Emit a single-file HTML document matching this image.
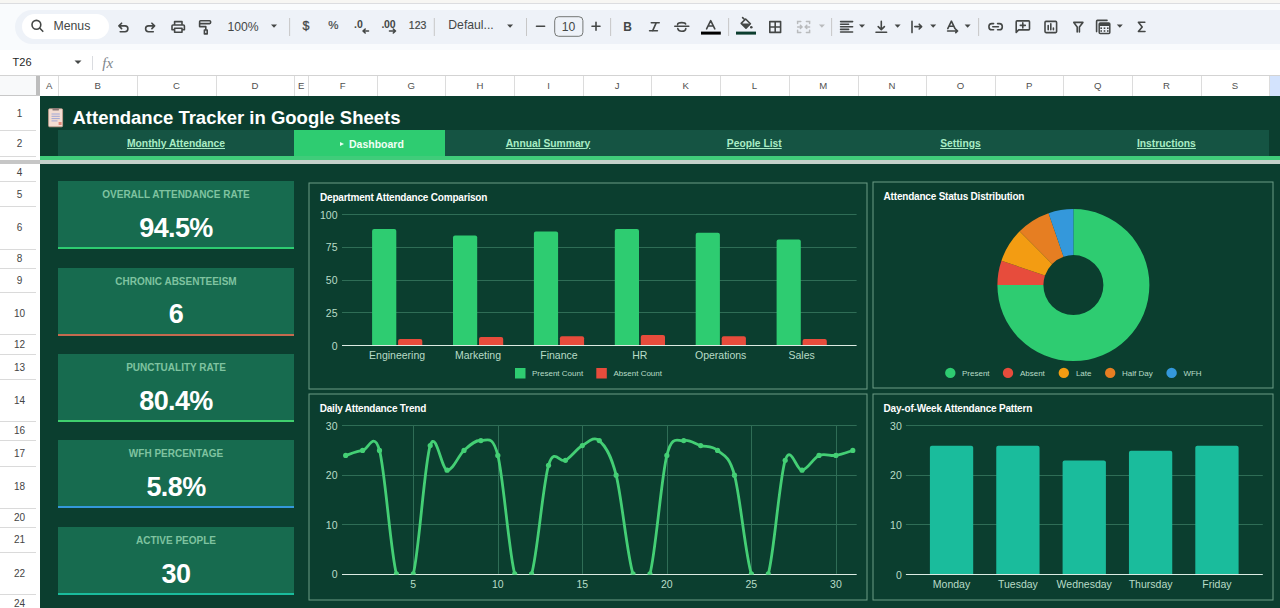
<!DOCTYPE html>
<html><head><meta charset="utf-8">
<style>
*{margin:0;padding:0;box-sizing:border-box}
html,body{width:1280px;height:608px;overflow:hidden;background:#fff;font-family:"Liberation Sans",sans-serif}
.a{position:absolute}
.rl{position:absolute;left:0;width:36px;height:1px;background:#dadada}
.rn{position:absolute;left:0;width:39px;text-align:center;font-size:10px;color:#444;height:12px;line-height:12px}
.cn{position:absolute;top:76px;height:20px;line-height:20px;text-align:center;font-size:9.6px;color:#505050}
.cl{position:absolute;top:76px;width:1px;height:20px;background:#dcdcdc}
.sep{position:absolute;top:18px;width:1px;height:18px;background:#c7c9cc}
.lbl{position:absolute;left:58px;width:236px;text-align:center;font-size:10px;font-weight:bold;color:#7fc3a0;letter-spacing:0px;line-height:12px}
.val{position:absolute;left:58px;width:236px;text-align:center;font-size:27px;font-weight:bold;color:#fff;letter-spacing:-0.6px;line-height:30px}
.nav{position:absolute;top:130.5px;height:26px;line-height:26px;text-align:center;font-size:10.3px;font-weight:bold;color:#a9ecc4;text-decoration:underline}
</style></head><body>

<div class="a" style="left:0;top:0;width:1280px;height:3px;background:#f7f6f3"></div>
<div class="a" style="left:0;top:3px;width:1280px;height:1px;background:#dcdde0"></div>
<div class="a" style="left:0;top:4px;width:1280px;height:46px;background:#f9fbfd"></div>
<div class="a" style="left:15px;top:9.6px;width:1300px;height:34px;background:#eef2f8;border-radius:17px"></div>
<div class="a" style="left:22px;top:14px;width:87px;height:25px;background:#fff;border-radius:13px"></div>
<div class="a" style="left:0;top:50px;width:1280px;height:25px;background:#fff"></div>
<div class="a" style="left:0;top:75px;width:1280px;height:1px;background:#d3d3d3"></div>
<div class="a" style="left:0;top:76px;width:36px;height:20px;background:#f8f9fa"></div>
<div class="a" style="left:36px;top:76px;width:4px;height:20px;background:#bdbdbd"></div>
<div class="cn" style="left:40px;width:18.4px">A</div>
<div class="cn" style="left:58.4px;width:78.69999999999999px">B</div>
<div class="cn" style="left:137.1px;width:78.5px">C</div>
<div class="cn" style="left:215.6px;width:78.6px">D</div>
<div class="cn" style="left:294.2px;width:14.199999999999989px">E</div>
<div class="cn" style="left:308.4px;width:68.5px">F</div>
<div class="cn" style="left:376.9px;width:68.5px">G</div>
<div class="cn" style="left:445.4px;width:69.0px">H</div>
<div class="cn" style="left:514.4px;width:68.5px">I</div>
<div class="cn" style="left:582.9px;width:68.39999999999998px">J</div>
<div class="cn" style="left:651.3px;width:68.70000000000005px">K</div>
<div class="cn" style="left:720px;width:68.79999999999995px">L</div>
<div class="cn" style="left:788.8px;width:68.70000000000005px">M</div>
<div class="cn" style="left:857.5px;width:68.70000000000005px">N</div>
<div class="cn" style="left:926.2px;width:68.79999999999995px">O</div>
<div class="cn" style="left:995px;width:68.40000000000009px">P</div>
<div class="cn" style="left:1063.4px;width:68.79999999999995px">Q</div>
<div class="cn" style="left:1132.2px;width:68.5px">R</div>
<div class="cn" style="left:1200.7px;width:68.70000000000005px">S</div>
<div class="cl" style="left:58px"></div>
<div class="cl" style="left:137px"></div>
<div class="cl" style="left:216px"></div>
<div class="cl" style="left:294px"></div>
<div class="cl" style="left:308px"></div>
<div class="cl" style="left:377px"></div>
<div class="cl" style="left:445px"></div>
<div class="cl" style="left:514px"></div>
<div class="cl" style="left:583px"></div>
<div class="cl" style="left:651px"></div>
<div class="cl" style="left:720px"></div>
<div class="cl" style="left:789px"></div>
<div class="cl" style="left:858px"></div>
<div class="cl" style="left:926px"></div>
<div class="cl" style="left:995px"></div>
<div class="cl" style="left:1063px"></div>
<div class="cl" style="left:1132px"></div>
<div class="cl" style="left:1201px"></div>
<div class="cl" style="left:1269px"></div>
<div class="a" style="left:1270px;top:76px;width:10px;height:20px;background:#d3e3fd"></div>
<svg class="a" style="left:0;top:0" width="1280" height="76" font-family="Liberation Sans, sans-serif">
<circle cx="36.4" cy="24.8" r="4.4" fill="none" stroke="#444746" stroke-width="1.6" stroke-linecap="round" stroke-linejoin="round" stroke-width="1.8"/><line x1="39.6" y1="28" x2="42.8" y2="31.3" fill="none" stroke="#444746" stroke-width="1.6" stroke-linecap="round" stroke-linejoin="round" stroke-width="1.9"/>
<text x="53.4" y="30.2" font-size="12.3" fill="#444746">Menus</text>
<path d="M121.6,23.2 L118.9,25.9 L121.6,28.6 M119.2,25.9 H125 A2.9,2.9 0 0 1 125,31.7 H120.2" fill="none" stroke="#444746" stroke-width="1.6" stroke-linecap="round" stroke-linejoin="round"/>
<path d="M151.9,23.2 L154.6,25.9 L151.9,28.6 M154.3,25.9 H148.5 A2.9,2.9 0 0 0 148.5,31.7 H153.3" fill="none" stroke="#444746" stroke-width="1.6" stroke-linecap="round" stroke-linejoin="round"/>
<path d="M174.6,24.6 V21.6 H182 V24.6 M174.6,29.8 H172 V26 Q172,25 173,25 H183.4 Q184.4,25 184.4,26 V29.8 H182 M174.6,28.2 H182 V32.3 H174.6 Z" fill="none" stroke="#444746" stroke-width="1.6" stroke-linecap="round" stroke-linejoin="round"/>
<path d="M199.6,21.8 Q199.6,20.8 200.6,20.8 H209.6 Q210.6,20.8 210.6,21.8 V22.6 Q210.6,23.6 209.6,23.6 H200.6 Q199.6,23.6 199.6,22.6 Z M199.6,23 V26.6 H205.8 V29.8 M204.4,30 H207.2 V33.9 H204.4 Z" fill="none" stroke="#444746" stroke-width="1.6" stroke-linecap="round" stroke-linejoin="round"/>
<text x="227.5" y="30.8" font-size="12.2" fill="#444746">100%</text>
<path d="M271.0,24.599999999999998 H277.0 L274,27.8 Z" fill="#444746"/>
<rect x="289.1" y="18" width="1" height="18" fill="#c7c7c7"/>
<rect x="433.8" y="18" width="1" height="18" fill="#c7c7c7"/>
<rect x="526.0" y="18" width="1" height="18" fill="#c7c7c7"/>
<rect x="610.1" y="18" width="1" height="18" fill="#c7c7c7"/>
<rect x="728.1" y="18" width="1" height="18" fill="#c7c7c7"/>
<rect x="831.1" y="18" width="1" height="18" fill="#c7c7c7"/>
<rect x="978.1" y="18" width="1" height="18" fill="#c7c7c7"/>
<text x="305.9" y="30.2" font-size="12.5" fill="#444746" stroke="#444746" stroke-width="0.3" text-anchor="middle">$</text>
<text x="333.4" y="29.3" font-size="11.5" fill="#444746" stroke="#444746" stroke-width="0.2" text-anchor="middle">%</text>
<text x="354" y="27.8" font-size="10.5" font-weight="bold" fill="#444746">.0</text>
<path d="M368.5,31 H363 M365.2,29 L363,31 L365.2,33" fill="none" stroke="#444746" stroke-width="1.6" stroke-linecap="round" stroke-linejoin="round" stroke-width="1.5"/>
<text x="381.5" y="27.8" font-size="10.5" font-weight="bold" fill="#444746" letter-spacing="-0.3">.00</text>
<path d="M389.5,31 H395.5 M393.3,29 L395.5,31 L393.3,33" fill="none" stroke="#444746" stroke-width="1.6" stroke-linecap="round" stroke-linejoin="round" stroke-width="1.5"/>
<text x="417.6" y="29.4" font-size="10.5" fill="#444746" stroke="#444746" stroke-width="0.2" text-anchor="middle">123</text>
<text x="448.3" y="29.4" font-size="12.2" fill="#444746">Defaul...</text>
<path d="M507.1,24.599999999999998 H513.1 L510.1,27.8 Z" fill="#444746"/>
<line x1="536.5" y1="26.2" x2="544.6" y2="26.2" fill="none" stroke="#444746" stroke-width="1.6" stroke-linecap="round" stroke-linejoin="round"/>
<rect x="554.7" y="16.7" width="28.2" height="19.6" rx="4" fill="none" stroke="#747775" stroke-width="1"/>
<text x="568.6" y="30.7" font-size="12.2" fill="#444746" text-anchor="middle">10</text>
<path d="M592,26.2 H600 M596,22.2 V30.2" fill="none" stroke="#444746" stroke-width="1.6" stroke-linecap="round" stroke-linejoin="round"/>
<text x="627.5" y="31.2" font-size="12" font-weight="bold" fill="#444746" text-anchor="middle">B</text>
<path d="M651.3,22.8 H659.2 M649.6,30.8 H657.4 M656.2,22.8 L652.6,30.8" fill="none" stroke="#444746" stroke-width="1.6" stroke-linecap="round" stroke-linejoin="round" stroke-width="2"/>
<path d="M674.8,26.2 H688.8 M677.6,24.6 Q677.6,22.6 681.8,22.6 Q685.2,22.6 685.6,24 M677.8,28.6 Q678.4,31.2 681.8,31.2 Q685.6,31.2 685.8,28.6" fill="none" stroke="#444746" stroke-width="1.6" stroke-linecap="round" stroke-linejoin="round" stroke-width="1.5"/>
<path d="M706.6,28.8 L710.7,20.6 L714.8,28.8 M708,26 H713.4" fill="none" stroke="#444746" stroke-width="1.6" stroke-linecap="round" stroke-linejoin="round" stroke-width="1.7"/>
<rect x="701" y="31.6" width="19.8" height="3" fill="#000"/>
<path d="M742.6,17.6 L744.8,19.8 M741.2,23.4 L745.6,19 L750.4,23.8 L746,28.2 Z" fill="none" stroke="#444746" stroke-width="1.6" stroke-linecap="round" stroke-linejoin="round" stroke-width="1.5"/>
<path d="M741.6,23.6 L750,23.6 L746,27.8 Z" fill="#444746"/>
<circle cx="751.3" cy="27.3" r="1.3" fill="#444746"/>
<rect x="736" y="31.6" width="20" height="3" fill="#0c3d2e"/>
<path d="M769.8,21.6 H780.6 V32.4 H769.8 Z M775.2,21.6 V32.4 M769.8,27 H780.6" fill="none" stroke="#444746" stroke-width="1.6" stroke-linecap="round" stroke-linejoin="round"/>
<path d="M797.6,23.6 V21.4 H800.8 M797.6,30.2 V32.4 H800.8 M809.6,23.6 V21.4 H806.4 M809.6,30.2 V32.4 H806.4 M797.6,26.9 H802 M800.4,25.3 L802,26.9 L800.4,28.5 M809.6,26.9 H805.2 M806.8,25.3 L805.2,26.9 L806.8,28.5" fill="none" stroke="#b9bbbd" stroke-width="1.5" stroke-linecap="round"/>
<path d="M818.9,24.599999999999998 H824.9 L821.9,27.8 Z" fill="#b9bbbd"/>
<path d="M840.6,21.6 H852.6 M840.6,24.2 H848.6 M840.6,26.8 H852.6 M840.6,29.4 H848.6 M840.6,32 H852.6" fill="none" stroke="#444746" stroke-width="1.6" stroke-linecap="round" stroke-linejoin="round" stroke-width="1.4" stroke-linecap="butt"/>
<path d="M859.0,24.599999999999998 H865.0 L862,27.8 Z" fill="#444746"/>
<path d="M881.3,21.4 V29.6 M878.2,26.6 L881.3,29.6 L884.4,26.6 M876,32.3 H886.6" fill="none" stroke="#444746" stroke-width="1.6" stroke-linecap="round" stroke-linejoin="round" stroke-width="1.6"/>
<path d="M894.6,24.599999999999998 H900.6 L897.6,27.8 Z" fill="#444746"/>
<path d="M912,21.4 V32.6 M914.8,26.6 H921.6 M919.2,24.2 L921.6,26.6 L919.2,29" fill="none" stroke="#444746" stroke-width="1.6" stroke-linecap="round" stroke-linejoin="round" stroke-width="1.6"/>
<path d="M930.2,24.599999999999998 H936.2 L933.2,27.8 Z" fill="#444746"/>
<path d="M947.8,28.6 L951.4,21.2 L955,28.6 M949,26.2 H953.8 M947.6,31 H957.6 M955.8,29.4 L957.6,31 L955.8,32.6" fill="none" stroke="#444746" stroke-width="1.6" stroke-linecap="round" stroke-linejoin="round" stroke-width="1.4"/>
<path d="M964.6,24.599999999999998 H970.6 L967.6,27.8 Z" fill="#444746"/>
<path d="M993.6,23.6 H991.8 Q988.9,23.6 988.9,26.7 Q988.9,29.8 991.8,29.8 H993.6 M997.6,23.6 H999.4 Q1002.3,23.6 1002.3,26.7 Q1002.3,29.8 999.4,29.8 H997.6 M992.8,26.7 H998.4" fill="none" stroke="#444746" stroke-width="1.6" stroke-linecap="round" stroke-linejoin="round" stroke-width="1.6"/>
<path d="M1016.2,32.4 V21.8 Q1016.2,20.9 1017.1,20.9 H1028.6 Q1029.5,20.9 1029.5,21.8 V29 Q1029.5,29.9 1028.6,29.9 H1018.6 Z" fill="none" stroke="#444746" stroke-width="1.6" stroke-linecap="round" stroke-linejoin="round" stroke-width="1.5"/><path d="M1022.8,22.9 V27.9 M1020.3,25.4 H1025.3" fill="none" stroke="#444746" stroke-width="1.6" stroke-linecap="round" stroke-linejoin="round" stroke-width="1.9"/>
<path d="M1045,22.4 Q1045,21.4 1046,21.4 H1055.6 Q1056.6,21.4 1056.6,22.4 V31.6 Q1056.6,32.6 1055.6,32.6 H1046 Q1045,32.6 1045,31.6 Z M1048.2,25.6 V29.8 M1050.8,23.8 V29.8 M1053.4,28 V29.8" fill="none" stroke="#444746" stroke-width="1.6" stroke-linecap="round" stroke-linejoin="round" stroke-width="1.5"/>
<path d="M1073.8,22.4 H1082.9 L1079.4,27 V32 M1073.8,22.4 L1077.2,27 V32" fill="none" stroke="#444746" stroke-width="1.6" stroke-linecap="round" stroke-linejoin="round" stroke-width="1.6"/>
<path d="M1096.6,31.6 V21.2 Q1096.6,20.4 1097.4,20.4 H1107" fill="none" stroke="#444746" stroke-width="1.6" stroke-linecap="round" stroke-linejoin="round" stroke-width="1.3"/>
<rect x="1099.2" y="23" width="10.6" height="10.4" rx="1" fill="none" stroke="#444746" stroke-width="1.5"/>
<rect x="1099.2" y="23" width="10.6" height="3" fill="#444746"/>
<rect x="1100.4" y="27.4" width="1.6" height="1.6" fill="#444746"/>
<rect x="1103.7" y="27.4" width="1.6" height="1.6" fill="#444746"/>
<rect x="1107.0" y="27.4" width="1.6" height="1.6" fill="#444746"/>
<rect x="1100.4" y="30.2" width="1.6" height="1.6" fill="#444746"/>
<rect x="1103.7" y="30.2" width="1.6" height="1.6" fill="#444746"/>
<rect x="1107.0" y="30.2" width="1.6" height="1.6" fill="#444746"/>
<path d="M1116.8,24.599999999999998 H1122.8 L1119.8,27.8 Z" fill="#444746"/>
<path d="M1144.8,22.2 H1138.4 L1142.2,26.9 L1138.4,31.5 H1145" fill="none" stroke="#444746" stroke-width="1.6" stroke-linecap="round" stroke-linejoin="round" stroke-width="2.3"/>
<text x="12.6" y="66.3" font-size="11" fill="#1f1f1f">T26</text>
<path d="M74.5,60.400000000000006 H81.5 L78,64.0 Z" fill="#444746"/>
<rect x="92" y="56" width="1" height="14" fill="#dadce0"/>
<text x="102.3" y="67.6" font-size="15" font-style="italic" font-family="Liberation Serif, serif" fill="#80868b">fx</text>
</svg>
<div class="a" style="left:40px;top:96px;width:1240px;height:512px;background:#0b3e2f"></div>
<div class="a" style="left:0;top:96px;width:36px;height:512px;background:#fff"></div>
<div class="a" style="left:0;top:94.5px;width:40px;height:1.8px;background:#c8c8c8"></div>
<div class="rl" style="top:130px"></div>
<div class="rl" style="top:156px"></div>
<div class="rl" style="top:181px"></div>
<div class="rl" style="top:206px"></div>
<div class="rl" style="top:249px"></div>
<div class="rl" style="top:268px"></div>
<div class="rl" style="top:292px"></div>
<div class="rl" style="top:334px"></div>
<div class="rl" style="top:354px"></div>
<div class="rl" style="top:379px"></div>
<div class="rl" style="top:421px"></div>
<div class="rl" style="top:440px"></div>
<div class="rl" style="top:466px"></div>
<div class="rl" style="top:508px"></div>
<div class="rl" style="top:527px"></div>
<div class="rl" style="top:552px"></div>
<div class="rl" style="top:594px"></div>
<div class="a" style="left:0;top:159.5px;width:40px;height:4px;background:#c6c6c6"></div>
<div class="rn" style="top:107.8px">1</div>
<div class="rn" style="top:137.8px">2</div>
<div class="rn" style="top:167.0px">4</div>
<div class="rn" style="top:188.7px">5</div>
<div class="rn" style="top:222.4px">6</div>
<div class="rn" style="top:253.4px">8</div>
<div class="rn" style="top:275.1px">9</div>
<div class="rn" style="top:307.9px">10</div>
<div class="rn" style="top:338.9px">12</div>
<div class="rn" style="top:361.6px">13</div>
<div class="rn" style="top:394.9px">14</div>
<div class="rn" style="top:425.4px">16</div>
<div class="rn" style="top:447.7px">17</div>
<div class="rn" style="top:481.4px">18</div>
<div class="rn" style="top:512.1px">20</div>
<div class="rn" style="top:534.4px">21</div>
<div class="rn" style="top:567.8px">22</div>
<div class="rn" style="top:598.1px">24</div>
<div class="a" style="left:72.5px;top:107px;font-size:18.5px;font-weight:bold;color:#fff;white-space:nowrap">Attendance Tracker in Google Sheets</div>
<svg class="a" style="left:47px;top:107px" width="18" height="21">
<rect x="1.6" y="1.8" width="14" height="18" rx="1" fill="#f3ddd2" stroke="#caa08e" stroke-width="0.8"/>
<rect x="5.5" y="1" width="6.4" height="2.6" rx="0.6" fill="#8d7a78"/>
<path d="M4.5,7 H12.8 M4.5,9.3 H12.8 M4.5,11.6 H12.8 M4.5,13.9 H10.5" stroke="#9fa7d6" stroke-width="1"/>
<rect x="11.6" y="15" width="3" height="3" fill="#e3897a"/>
</svg>
<div class="a" style="left:58px;top:130px;width:1211px;height:26px;background:#155443"></div>
<div class="a" style="left:294px;top:130px;width:151px;height:26px;background:#2ecc71"></div>
<div class="a" style="left:40px;top:156px;width:1240px;height:4px;background:#40cc7a"></div>
<div class="a" style="left:40px;top:160px;width:1240px;height:4px;background:#c4d1ca"></div>
<div class="nav" style="left:58px;width:236px">Monthly Attendance</div>
<div class="nav" style="left:445px;width:206px">Annual Summary</div>
<div class="nav" style="left:651px;width:206.5px">People List</div>
<div class="nav" style="left:857.5px;width:205.9000000000001px">Settings</div>
<div class="nav" style="left:1063.4px;width:206.0px">Instructions</div>
<div class="a" style="left:349px;top:130.5px;height:26px;line-height:26px;font-size:10.5px;font-weight:bold;color:#f0fff5">Dashboard</div>
<svg class="a" style="left:339px;top:141px" width="6" height="6"><path d="M1,1 L5,3 L1,5 Z" fill="#e8fff0"/></svg>
<div class="a" style="left:58px;top:181.3px;width:236px;height:68px;background:#176b4f;border-bottom:2px solid #2ecc71"></div>
<div class="lbl" style="top:189.3px">OVERALL ATTENDANCE RATE</div>
<div class="val" style="top:212.8px">94.5%</div>
<div class="a" style="left:58px;top:267.8px;width:236px;height:68px;background:#176b4f;border-bottom:2px solid #c56a4f"></div>
<div class="lbl" style="top:275.8px">CHRONIC ABSENTEEISM</div>
<div class="val" style="top:299.3px">6</div>
<div class="a" style="left:58px;top:354.1px;width:236px;height:68px;background:#176b4f;border-bottom:2px solid #3fcf6e"></div>
<div class="lbl" style="top:362.1px">PUNCTUALITY RATE</div>
<div class="val" style="top:385.6px">80.4%</div>
<div class="a" style="left:58px;top:440.3px;width:236px;height:68px;background:#176b4f;border-bottom:2px solid #3498db"></div>
<div class="lbl" style="top:448.3px">WFH PERCENTAGE</div>
<div class="val" style="top:471.8px">5.8%</div>
<div class="a" style="left:58px;top:527px;width:236px;height:68px;background:#176b4f;border-bottom:2px solid #1abc9c"></div>
<div class="lbl" style="top:535px">ACTIVE PEOPLE</div>
<div class="val" style="top:558.5px">30</div>
<svg class="a" style="left:0;top:0" width="1280" height="608" font-family="Liberation Sans, sans-serif">
<rect x="309.0" y="183.0" width="558.0" height="206.0" fill="#0b3e2f" stroke="#6d9c86" stroke-width="1"/>
<text x="320" y="201" font-size="10" font-weight="bold" fill="#ffffff" letter-spacing="-0.2">Department Attendance Comparison</text>
<text x="337.5" y="345.5" font-size="10.5" fill="#b8dcc7" text-anchor="end" dominant-baseline="central">0</text>
<line x1="342" y1="312.5" x2="856.6" y2="312.5" stroke="#2f6d56" stroke-width="1"/>
<text x="337.5" y="312.75" font-size="10.5" fill="#b8dcc7" text-anchor="end" dominant-baseline="central">25</text>
<line x1="342" y1="280.5" x2="856.6" y2="280.5" stroke="#2f6d56" stroke-width="1"/>
<text x="337.5" y="280.0" font-size="10.5" fill="#b8dcc7" text-anchor="end" dominant-baseline="central">50</text>
<line x1="342" y1="247.5" x2="856.6" y2="247.5" stroke="#2f6d56" stroke-width="1"/>
<text x="337.5" y="247.25" font-size="10.5" fill="#b8dcc7" text-anchor="end" dominant-baseline="central">75</text>
<line x1="342" y1="214.5" x2="856.6" y2="214.5" stroke="#2f6d56" stroke-width="1"/>
<text x="337.5" y="214.5" font-size="10.5" fill="#b8dcc7" text-anchor="end" dominant-baseline="central">100</text>
<path d="M372.1,345.5 V230.91 Q372.1,228.91 374.1,228.91 H394.3 Q396.3,228.91 396.3,230.91 V345.5 Z" fill="#2ecc71"/>
<path d="M398.1,345.5 V340.95 Q398.1,338.95 400.1,338.95 H420.3 Q422.3,338.95 422.3,340.95 V345.5 Z" fill="#e74c3c"/>
<text x="397.1" y="354.8" font-size="10.5" fill="#b8dcc7" text-anchor="middle" dominant-baseline="central">Engineering</text>
<path d="M453.0,345.5 V237.45999999999998 Q453.0,235.45999999999998 455.0,235.45999999999998 H475.2 Q477.2,235.45999999999998 477.2,237.45999999999998 V345.5 Z" fill="#2ecc71"/>
<path d="M479.0,345.5 V338.985 Q479.0,336.985 481.0,336.985 H501.2 Q503.2,336.985 503.2,338.985 V345.5 Z" fill="#e74c3c"/>
<text x="478.0" y="354.8" font-size="10.5" fill="#b8dcc7" text-anchor="middle" dominant-baseline="central">Marketing</text>
<path d="M533.9000000000001,345.5 V233.53 Q533.9000000000001,231.53 535.9000000000001,231.53 H556.1000000000001 Q558.1000000000001,231.53 558.1000000000001,233.53 V345.5 Z" fill="#2ecc71"/>
<path d="M559.9000000000001,345.5 V338.33 Q559.9000000000001,336.33 561.9000000000001,336.33 H582.1000000000001 Q584.1000000000001,336.33 584.1000000000001,338.33 V345.5 Z" fill="#e74c3c"/>
<text x="558.9000000000001" y="354.8" font-size="10.5" fill="#b8dcc7" text-anchor="middle" dominant-baseline="central">Finance</text>
<path d="M614.8000000000001,345.5 V230.91 Q614.8000000000001,228.91 616.8000000000001,228.91 H637.0000000000001 Q639.0000000000001,228.91 639.0000000000001,230.91 V345.5 Z" fill="#2ecc71"/>
<path d="M640.8000000000001,345.5 V337.02 Q640.8000000000001,335.02 642.8000000000001,335.02 H663.0000000000001 Q665.0000000000001,335.02 665.0000000000001,337.02 V345.5 Z" fill="#e74c3c"/>
<text x="639.8000000000001" y="354.8" font-size="10.5" fill="#b8dcc7" text-anchor="middle" dominant-baseline="central">HR</text>
<path d="M695.7,345.5 V234.83999999999997 Q695.7,232.83999999999997 697.7,232.83999999999997 H717.9000000000001 Q719.9000000000001,232.83999999999997 719.9000000000001,234.83999999999997 V345.5 Z" fill="#2ecc71"/>
<path d="M721.7,345.5 V338.33 Q721.7,336.33 723.7,336.33 H743.9000000000001 Q745.9000000000001,336.33 745.9000000000001,338.33 V345.5 Z" fill="#e74c3c"/>
<text x="720.7" y="354.8" font-size="10.5" fill="#b8dcc7" text-anchor="middle" dominant-baseline="central">Operations</text>
<path d="M776.6,345.5 V241.39 Q776.6,239.39 778.6,239.39 H798.8000000000001 Q800.8000000000001,239.39 800.8000000000001,241.39 V345.5 Z" fill="#2ecc71"/>
<path d="M802.6,345.5 V340.95 Q802.6,338.95 804.6,338.95 H824.8000000000001 Q826.8000000000001,338.95 826.8000000000001,340.95 V345.5 Z" fill="#e74c3c"/>
<text x="801.6" y="354.8" font-size="10.5" fill="#b8dcc7" text-anchor="middle" dominant-baseline="central">Sales</text>
<line x1="342" y1="345.5" x2="856.6" y2="345.5" stroke="#dcebe3" stroke-width="1"/>
<rect x="515" y="368" width="10.5" height="10.5" fill="#2ecc71"/>
<text x="532" y="376.3" font-size="8" fill="#b8dcc7">Present Count</text>
<rect x="596.3" y="368" width="10.5" height="10.5" fill="#e74c3c"/>
<text x="613.5" y="376.3" font-size="8" fill="#b8dcc7">Absent Count</text>
<rect x="873.0" y="182.0" width="400.0" height="206.0" fill="#0b3e2f" stroke="#6d9c86" stroke-width="1"/>
<text x="883.6" y="200" font-size="10" font-weight="bold" fill="#ffffff" letter-spacing="-0.2">Attendance Status Distribution</text>
<path d="M1073.40,209.10 A76,76 0 1 1 997.40,285.10 L1043.40,285.10 A30,30 0 1 0 1073.40,255.10 Z" fill="#2ecc71"/>
<path d="M997.40,285.10 A76,76 0 0 1 1001.42,260.71 L1044.99,275.47 A30,30 0 0 0 1043.40,285.10 Z" fill="#e74c3c"/>
<path d="M1001.42,260.71 A76,76 0 0 1 1019.66,231.36 L1052.19,263.89 A30,30 0 0 0 1044.99,275.47 Z" fill="#f39c12"/>
<path d="M1019.66,231.36 A76,76 0 0 1 1048.56,213.28 L1063.59,256.75 A30,30 0 0 0 1052.19,263.89 Z" fill="#e67e22"/>
<path d="M1048.56,213.28 A76,76 0 0 1 1073.40,209.10 L1073.40,255.10 A30,30 0 0 0 1063.59,256.75 Z" fill="#3498db"/>
<circle cx="950.3" cy="372.9" r="5.2" fill="#2ecc71"/>
<text x="962" y="376" font-size="8" fill="#b8dcc7">Present</text>
<circle cx="1008" cy="372.9" r="5.2" fill="#e74c3c"/>
<text x="1019.9" y="376" font-size="8" fill="#b8dcc7">Absent</text>
<circle cx="1063.8" cy="372.9" r="5.2" fill="#f39c12"/>
<text x="1075.9" y="376" font-size="8" fill="#b8dcc7">Late</text>
<circle cx="1110.2" cy="372.9" r="5.2" fill="#e67e22"/>
<text x="1122" y="376" font-size="8" fill="#b8dcc7">Half Day</text>
<circle cx="1171.6" cy="372.9" r="5.2" fill="#3498db"/>
<text x="1183.4" y="376" font-size="8" fill="#b8dcc7">WFH</text>
<rect x="309.0" y="394.0" width="558.0" height="206.0" fill="#0b3e2f" stroke="#6d9c86" stroke-width="1"/>
<text x="319.7" y="412" font-size="10" font-weight="bold" fill="#ffffff" letter-spacing="-0.2">Daily Attendance Trend</text>
<text x="337.5" y="573.9" font-size="10.5" fill="#b8dcc7" text-anchor="end" dominant-baseline="central">0</text>
<line x1="342" y1="524.5" x2="856.7" y2="524.5" stroke="#2f6d56" stroke-width="1"/>
<text x="337.5" y="524.53" font-size="10.5" fill="#b8dcc7" text-anchor="end" dominant-baseline="central">10</text>
<line x1="342" y1="475.5" x2="856.7" y2="475.5" stroke="#2f6d56" stroke-width="1"/>
<text x="337.5" y="475.15999999999997" font-size="10.5" fill="#b8dcc7" text-anchor="end" dominant-baseline="central">20</text>
<line x1="342" y1="425.5" x2="856.7" y2="425.5" stroke="#2f6d56" stroke-width="1"/>
<text x="337.5" y="425.78999999999996" font-size="10.5" fill="#b8dcc7" text-anchor="end" dominant-baseline="central">30</text>
<line x1="413.5" y1="425.8" x2="413.5" y2="573.9" stroke="#2f6d56" stroke-width="1"/>
<text x="413.296" y="584" font-size="10.5" fill="#b8dcc7" text-anchor="middle" dominant-baseline="central">5</text>
<line x1="498.5" y1="425.8" x2="498.5" y2="573.9" stroke="#2f6d56" stroke-width="1"/>
<text x="497.81600000000003" y="584" font-size="10.5" fill="#b8dcc7" text-anchor="middle" dominant-baseline="central">10</text>
<line x1="582.5" y1="425.8" x2="582.5" y2="573.9" stroke="#2f6d56" stroke-width="1"/>
<text x="582.336" y="584" font-size="10.5" fill="#b8dcc7" text-anchor="middle" dominant-baseline="central">15</text>
<line x1="667.5" y1="425.8" x2="667.5" y2="573.9" stroke="#2f6d56" stroke-width="1"/>
<text x="666.856" y="584" font-size="10.5" fill="#b8dcc7" text-anchor="middle" dominant-baseline="central">20</text>
<line x1="751.5" y1="425.8" x2="751.5" y2="573.9" stroke="#2f6d56" stroke-width="1"/>
<text x="751.376" y="584" font-size="10.5" fill="#b8dcc7" text-anchor="middle" dominant-baseline="central">25</text>
<line x1="836.5" y1="425.8" x2="836.5" y2="573.9" stroke="#2f6d56" stroke-width="1"/>
<text x="835.896" y="584" font-size="10.5" fill="#b8dcc7" text-anchor="middle" dominant-baseline="central">30</text>
<line x1="342" y1="574.5" x2="856.7" y2="574.5" stroke="#dcebe3" stroke-width="1"/>
<clipPath id="lc"><rect x="338" y="415" width="522" height="159.5"/></clipPath>
<g clip-path="url(#lc)"><path d="M345.68,455.41 C348.50,454.59 356.95,451.30 362.58,450.47 C368.22,449.65 373.85,429.90 379.49,450.47 C385.12,471.05 390.76,553.33 396.39,573.90 C402.03,594.47 407.66,595.29 413.30,573.90 C418.93,552.51 424.57,462.82 430.20,445.54 C435.83,428.26 441.47,469.40 447.10,470.22 C452.74,471.05 458.37,455.41 464.01,450.47 C469.64,445.54 475.28,439.78 480.91,440.60 C486.55,441.42 492.18,433.20 497.82,455.41 C503.45,477.63 509.09,554.15 514.72,573.90 C520.35,593.65 525.99,592.00 531.62,573.90 C537.26,555.80 542.89,484.21 548.53,465.29 C554.16,446.36 559.80,463.64 565.43,460.35 C571.07,457.06 576.70,448.83 582.34,445.54 C587.97,442.25 593.61,435.66 599.24,440.60 C604.87,445.54 610.51,452.94 616.14,475.16 C621.78,497.38 627.41,557.44 633.05,573.90 C638.68,590.36 644.32,593.65 649.95,573.90 C655.59,554.15 661.22,477.63 666.86,455.41 C672.49,433.20 678.13,442.25 683.76,440.60 C689.39,438.96 695.03,443.89 700.66,445.54 C706.30,447.18 711.93,445.54 717.57,450.47 C723.20,455.41 728.84,454.59 734.47,475.16 C740.11,495.73 745.74,557.44 751.38,573.90 C757.01,590.36 762.65,592.83 768.28,573.90 C773.91,554.97 779.55,477.63 785.18,460.35 C790.82,443.07 796.45,471.05 802.09,470.22 C807.72,469.40 813.36,457.88 818.99,455.41 C824.63,452.94 830.26,456.23 835.90,455.41 C841.53,454.59 849.98,451.30 852.80,450.47" fill="none" stroke="#44cf75" stroke-width="2.8" stroke-linejoin="round"/>
<circle cx="345.68" cy="455.41" r="2.6" fill="#44cf75"/>
<circle cx="362.58" cy="450.47" r="2.6" fill="#44cf75"/>
<circle cx="379.49" cy="450.47" r="2.6" fill="#44cf75"/>
<circle cx="396.39" cy="573.90" r="2.6" fill="#44cf75"/>
<circle cx="413.30" cy="573.90" r="2.6" fill="#44cf75"/>
<circle cx="430.20" cy="445.54" r="2.6" fill="#44cf75"/>
<circle cx="447.10" cy="470.22" r="2.6" fill="#44cf75"/>
<circle cx="464.01" cy="450.47" r="2.6" fill="#44cf75"/>
<circle cx="480.91" cy="440.60" r="2.6" fill="#44cf75"/>
<circle cx="497.82" cy="455.41" r="2.6" fill="#44cf75"/>
<circle cx="514.72" cy="573.90" r="2.6" fill="#44cf75"/>
<circle cx="531.62" cy="573.90" r="2.6" fill="#44cf75"/>
<circle cx="548.53" cy="465.29" r="2.6" fill="#44cf75"/>
<circle cx="565.43" cy="460.35" r="2.6" fill="#44cf75"/>
<circle cx="582.34" cy="445.54" r="2.6" fill="#44cf75"/>
<circle cx="599.24" cy="440.60" r="2.6" fill="#44cf75"/>
<circle cx="616.14" cy="475.16" r="2.6" fill="#44cf75"/>
<circle cx="633.05" cy="573.90" r="2.6" fill="#44cf75"/>
<circle cx="649.95" cy="573.90" r="2.6" fill="#44cf75"/>
<circle cx="666.86" cy="455.41" r="2.6" fill="#44cf75"/>
<circle cx="683.76" cy="440.60" r="2.6" fill="#44cf75"/>
<circle cx="700.66" cy="445.54" r="2.6" fill="#44cf75"/>
<circle cx="717.57" cy="450.47" r="2.6" fill="#44cf75"/>
<circle cx="734.47" cy="475.16" r="2.6" fill="#44cf75"/>
<circle cx="751.38" cy="573.90" r="2.6" fill="#44cf75"/>
<circle cx="768.28" cy="573.90" r="2.6" fill="#44cf75"/>
<circle cx="785.18" cy="460.35" r="2.6" fill="#44cf75"/>
<circle cx="802.09" cy="470.22" r="2.6" fill="#44cf75"/>
<circle cx="818.99" cy="455.41" r="2.6" fill="#44cf75"/>
<circle cx="835.90" cy="455.41" r="2.6" fill="#44cf75"/>
<circle cx="852.80" cy="450.47" r="2.6" fill="#44cf75"/>
</g>
<rect x="873.0" y="394.0" width="400.0" height="206.0" fill="#0b3e2f" stroke="#6d9c86" stroke-width="1"/>
<text x="883.6" y="412" font-size="10" font-weight="bold" fill="#ffffff" letter-spacing="-0.2">Day-of-Week Attendance Pattern</text>
<text x="901.8" y="574.5" font-size="10.5" fill="#b8dcc7" text-anchor="end" dominant-baseline="central">0</text>
<line x1="905.9" y1="524.5" x2="1262.8" y2="524.5" stroke="#2f6d56" stroke-width="1"/>
<text x="901.8" y="524.97" font-size="10.5" fill="#b8dcc7" text-anchor="end" dominant-baseline="central">10</text>
<line x1="905.9" y1="475.5" x2="1262.8" y2="475.5" stroke="#2f6d56" stroke-width="1"/>
<text x="901.8" y="475.44" font-size="10.5" fill="#b8dcc7" text-anchor="end" dominant-baseline="central">20</text>
<line x1="905.9" y1="425.5" x2="1262.8" y2="425.5" stroke="#2f6d56" stroke-width="1"/>
<text x="901.8" y="425.90999999999997" font-size="10.5" fill="#b8dcc7" text-anchor="end" dominant-baseline="central">30</text>
<path d="M929.9,574.5 V447.722 Q929.9,445.722 931.9,445.722 H971.1999999999999 Q973.1999999999999,445.722 973.1999999999999,447.722 V574.5 Z" fill="#1abc9c"/>
<text x="951.55" y="584.2" font-size="10.5" fill="#b8dcc7" text-anchor="middle" dominant-baseline="central">Monday</text>
<path d="M996.25,574.5 V447.722 Q996.25,445.722 998.25,445.722 H1037.55 Q1039.55,445.722 1039.55,447.722 V574.5 Z" fill="#1abc9c"/>
<text x="1017.9" y="584.2" font-size="10.5" fill="#b8dcc7" text-anchor="middle" dominant-baseline="central">Tuesday</text>
<path d="M1062.6,574.5 V462.581 Q1062.6,460.581 1064.6,460.581 H1103.8999999999999 Q1105.8999999999999,460.581 1105.8999999999999,462.581 V574.5 Z" fill="#1abc9c"/>
<text x="1084.25" y="584.2" font-size="10.5" fill="#b8dcc7" text-anchor="middle" dominant-baseline="central">Wednesday</text>
<path d="M1128.95,574.5 V452.675 Q1128.95,450.675 1130.95,450.675 H1170.25 Q1172.25,450.675 1172.25,452.675 V574.5 Z" fill="#1abc9c"/>
<text x="1150.6000000000001" y="584.2" font-size="10.5" fill="#b8dcc7" text-anchor="middle" dominant-baseline="central">Thursday</text>
<path d="M1195.3,574.5 V447.722 Q1195.3,445.722 1197.3,445.722 H1236.6 Q1238.6,445.722 1238.6,447.722 V574.5 Z" fill="#1abc9c"/>
<text x="1216.95" y="584.2" font-size="10.5" fill="#b8dcc7" text-anchor="middle" dominant-baseline="central">Friday</text>
<line x1="905.9" y1="574.5" x2="1262.8" y2="574.5" stroke="#dcebe3" stroke-width="1"/>
</svg>
</body></html>
